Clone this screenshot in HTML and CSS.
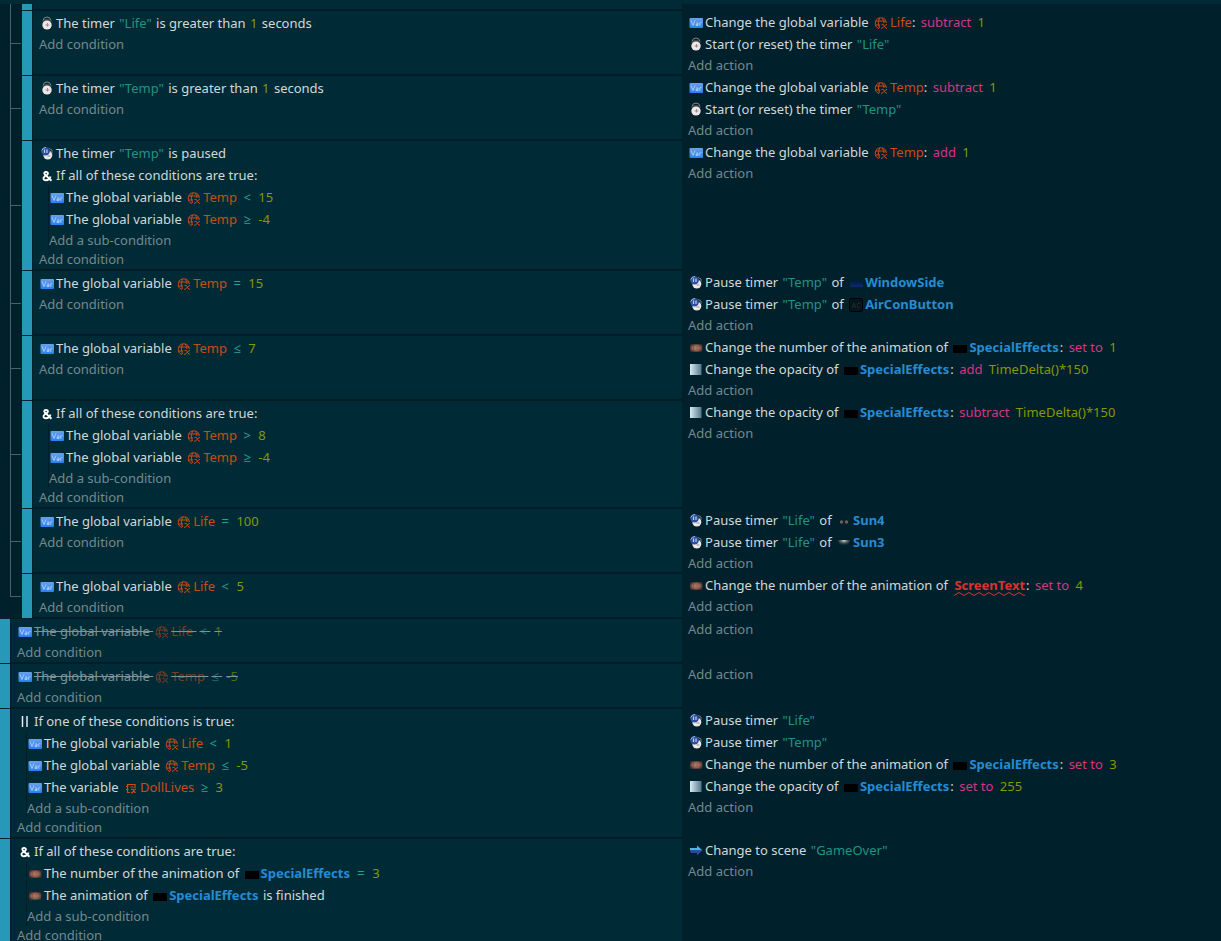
FILE: index.html
```html
<!DOCTYPE html>
<html lang="en">
<head>
<meta charset="utf-8">
<title>Events sheet</title>
<link rel="stylesheet" href="styles.css">
</head>
<body>
<svg class="defs" aria-hidden="true">
  <defs>
    <linearGradient id="g-var" x1="0" y1="0" x2="0" y2="1"><stop offset="0" stop-color="#6aa0e8"/><stop offset="1" stop-color="#2482f4"/></linearGradient>
    <linearGradient id="g-op" x1="0" y1="0" x2="1" y2="0"><stop offset="0" stop-color="#d8ebf2"/><stop offset="1" stop-color="#54788c"/></linearGradient>
    <linearGradient id="g-win" x1="0" y1="0" x2="0" y2="1"><stop offset="0" stop-color="#02184a"/><stop offset="1" stop-color="#0c2c6e"/></linearGradient>
    <radialGradient id="g-film"><stop offset="0" stop-color="#b98370"/><stop offset="0.7" stop-color="#8a5c4c"/><stop offset="1" stop-color="#49332f"/></radialGradient>
    <radialGradient id="g-sun" cx="0.5" cy="0.1" r="0.7"><stop offset="0" stop-color="#d8d2c8"/><stop offset="1" stop-color="#33403f" stop-opacity="0"/></radialGradient>
  </defs>
  <symbol id="var" viewBox="0 0 14 14">
    <rect x="0.5" y="3" width="13.5" height="10" rx="1" fill="url(#g-var)"/>
    <path d="M2 5.500 4 10.500 6 5.500M7.200 8h1.800v2.500H7V9.300h2M10.800 10.800V7.800q.6-.6 1.600-.2" fill="none" stroke="#a9caf6" stroke-width="1"/>
  </symbol>
  <symbol id="clock" viewBox="0 0 14 14">
    <path d="M3 4.500Q3.600 1 7 1t4 3.500" fill="none" stroke="#7d888b" stroke-width="1"/>
    <path d="M2.200 5 5 3h4l2.800 2-1 1.500H3.200z" fill="#40464b"/>
    <ellipse cx="7" cy="9" rx="4.700" ry="4.600" fill="#ece8e6"/>
    <path d="M7.500 7v3.500M5.500 9h4" stroke="#a08c8e" stroke-width="1"/>
  </symbol>
  <symbol id="pause" viewBox="0 0 14 14">
    <ellipse cx="7.800" cy="9" rx="4.500" ry="4.600" fill="#ebe8e8"/>
    <path d="M9 2.500l3 1.500v3" fill="none" stroke="#777d82"/>
    <path d="M7.500 10h3" stroke="#a08c8c"/>
    <circle cx="5.500" cy="5.300" r="4.300" fill="#2b4f9f"/>
    <path d="M1.800 4.500Q3 1.500 6 1.500" fill="none" stroke="#a3b6dc"/>
    <path d="M4.500 3.500v3.500M7 3.500v3.500" stroke="#c2d0ee" stroke-width="1.200"/>
  </symbol>
  <symbol id="and" viewBox="0 0 14 14">
    <path d="M11.500 12.700 5 6.700C3.500 5 4.500 3.900 6.200 3.900S8.600 5.500 7.200 6.700L4.600 8.400C2.500 10 3.500 12.300 5.800 12.300 8.500 12.300 10 10.500 10.500 8.600" fill="none" stroke="#fff" stroke-width="1.900"/>
  </symbol>
  <symbol id="or" viewBox="0 0 14 14"><path d="M4.500 2v11M9 2v11" stroke="#e8ecec" stroke-width="1.500"/></symbol>
  <symbol id="film" viewBox="0 0 14 14">
    <rect x="1" y="4" width="12.500" height="8" rx="2" fill="url(#g-film)"/>
    <path d="M4.500 6v4M8 6v4M11 6v4" stroke="#7c564a" stroke-width="0.600"/>
  </symbol>
  <symbol id="opacity" viewBox="0 0 14 14"><rect x="1" y="2" width="11.500" height="11" fill="url(#g-op)"/></symbol>
  <symbol id="scene" viewBox="0 0 14 14">
    <path d="M1 5h7V2.500L13.500 7.500H1z" fill="#4db4ea"/><path d="M1 7.500h12.500L8 12.500V10H2z" fill="#3344a4"/>
  </symbol>
  <symbol id="globe" viewBox="0 0 14 14">
    <g fill="none" stroke="#cb4b16" stroke-width="1">
      <path d="M12.300 7A5.500 5.500 0 1 0 5 12.500M5.500 12Q3 7 5.500 2M8 2q2 2 2 5M2 5h10M1.500 9H6"/>
      <path d="M7.500 8.500q2-1 2.500 1t3 3M7 12.500q2-.3 3-2t3-2"/>
    </g>
  </symbol>
  <symbol id="scenevar" viewBox="0 0 14 14">
    <g fill="none" stroke="#cb4b16" stroke-width="1.200">
      <path d="M11 7.500V3.500H3.500v8H6M2 5.500h2.500M2 8.500h2.500M6.500 6h3"/>
      <path d="M7 8.500q2-1 2.500 1t2.500 2M7 12q2-.3 2.500-2t2.500-1.500"/>
    </g>
  </symbol>
  <symbol id="black" viewBox="0 0 14 14"><rect y="4" width="14" height="8" fill="#000"/></symbol>
  <symbol id="window" viewBox="0 0 14 14"><rect x="1" y="5" width="13" height="6" fill="url(#g-win)"/></symbol>
  <symbol id="aircon" viewBox="0 0 14 14">
    <rect x="0.500" y="0.500" width="13" height="13" rx="2" fill="#02161c" stroke="#000"/>
    <path d="M3 10 5 5l1.500 5M3.500 8h3M11 5.500q-3-1-3 2t3 2" fill="none" stroke="#22282a"/>
  </symbol>
  <symbol id="dots" viewBox="0 0 14 14"><g fill="#765e58"><circle cx="4.500" cy="8" r="1.700"/><circle cx="9.500" cy="8" r="1.700"/></g></symbol>
  <symbol id="sun" viewBox="0 0 14 14"><path d="M1 4h12q-1 7-6 7T1 4" fill="url(#g-sun)"/></symbol>
</svg>

<main class="sheet">
  <div class="edge"></div>
  <section class="sub-events">
    <div class="event partial"><div class="branch"></div><div class="handle"></div><div class="conditions"></div><div class="actions"></div></div>

    <article class="event">
      <div class="branch"></div><div class="handle"></div>
      <div class="conditions">
        <div class="item"><svg><use href="#clock"/></svg><p>The timer <i class="str">"Life"</i> is greater than <i class="num">1</i> seconds</p></div>
        <button class="add">Add condition</button>
      </div>
      <div class="actions">
        <div class="item"><svg><use href="#var"/></svg><p>Change the global variable <i class="var"><svg><use href="#globe"/></svg>Life</i>: <i class="mod">subtract</i> <i class="num">1</i></p></div>
        <div class="item"><svg><use href="#clock"/></svg><p>Start (or reset) the timer <i class="str">"Life"</i></p></div>
        <button class="add">Add action</button>
      </div>
    </article>

    <article class="event">
      <div class="branch"></div><div class="handle"></div>
      <div class="conditions">
        <div class="item"><svg><use href="#clock"/></svg><p>The timer <i class="str">"Temp"</i> is greater than <i class="num">1</i> seconds</p></div>
        <button class="add">Add condition</button>
      </div>
      <div class="actions">
        <div class="item"><svg><use href="#var"/></svg><p>Change the global variable <i class="var"><svg><use href="#globe"/></svg>Temp</i>: <i class="mod">subtract</i> <i class="num">1</i></p></div>
        <div class="item"><svg><use href="#clock"/></svg><p>Start (or reset) the timer <i class="str">"Temp"</i></p></div>
        <button class="add">Add action</button>
      </div>
    </article>

    <article class="event">
      <div class="branch"></div><div class="handle"></div>
      <div class="conditions">
        <div class="item"><svg><use href="#pause"/></svg><p>The timer <i class="str">"Temp"</i> is paused</p></div>
        <div class="item"><svg><use href="#and"/></svg><p>If all of these conditions are true:</p></div>
        <div class="nested">
          <div class="item"><svg><use href="#var"/></svg><p>The global variable <i class="var"><svg><use href="#globe"/></svg>Temp</i> <i class="rel">&lt;</i> <i class="num">15</i></p></div>
          <div class="item"><svg><use href="#var"/></svg><p>The global variable <i class="var"><svg><use href="#globe"/></svg>Temp</i> <i class="rel">≥</i> <i class="num">-4</i></p></div>
          <button class="add">Add a sub-condition</button>
        </div>
        <button class="add">Add condition</button>
      </div>
      <div class="actions">
        <div class="item"><svg><use href="#var"/></svg><p>Change the global variable <i class="var"><svg><use href="#globe"/></svg>Temp</i>: <i class="mod">add</i> <i class="num">1</i></p></div>
        <button class="add">Add action</button>
      </div>
    </article>

    <article class="event">
      <div class="branch"></div><div class="handle"></div>
      <div class="conditions">
        <div class="item"><svg><use href="#var"/></svg><p>The global variable <i class="var"><svg><use href="#globe"/></svg>Temp</i> <i class="rel">=</i> <i class="num">15</i></p></div>
        <button class="add">Add condition</button>
      </div>
      <div class="actions">
        <div class="item"><svg><use href="#pause"/></svg><p>Pause timer <i class="str">"Temp"</i> of <b class="obj"><svg><use href="#window"/></svg>WindowSide</b></p></div>
        <div class="item"><svg><use href="#pause"/></svg><p>Pause timer <i class="str">"Temp"</i> of <b class="obj"><svg><use href="#aircon"/></svg>AirConButton</b></p></div>
        <button class="add">Add action</button>
      </div>
    </article>

    <article class="event">
      <div class="branch"></div><div class="handle"></div>
      <div class="conditions">
        <div class="item"><svg><use href="#var"/></svg><p>The global variable <i class="var"><svg><use href="#globe"/></svg>Temp</i> <i class="rel">≤</i> <i class="num">7</i></p></div>
        <button class="add">Add condition</button>
      </div>
      <div class="actions">
        <div class="item"><svg><use href="#film"/></svg><p>Change the number of the animation of <b class="obj"><svg><use href="#black"/></svg>SpecialEffects</b>: <i class="mod">set to</i> <i class="num">1</i></p></div>
        <div class="item"><svg><use href="#opacity"/></svg><p>Change the opacity of <b class="obj"><svg><use href="#black"/></svg>SpecialEffects</b>: <i class="mod">add</i> <i class="num">TimeDelta()*150</i></p></div>
        <button class="add">Add action</button>
      </div>
    </article>

    <article class="event">
      <div class="branch"></div><div class="handle"></div>
      <div class="conditions">
        <div class="item"><svg><use href="#and"/></svg><p>If all of these conditions are true:</p></div>
        <div class="nested">
          <div class="item"><svg><use href="#var"/></svg><p>The global variable <i class="var"><svg><use href="#globe"/></svg>Temp</i> <i class="rel">&gt;</i> <i class="num">8</i></p></div>
          <div class="item"><svg><use href="#var"/></svg><p>The global variable <i class="var"><svg><use href="#globe"/></svg>Temp</i> <i class="rel">≥</i> <i class="num">-4</i></p></div>
          <button class="add">Add a sub-condition</button>
        </div>
        <button class="add">Add condition</button>
      </div>
      <div class="actions">
        <div class="item"><svg><use href="#opacity"/></svg><p>Change the opacity of <b class="obj"><svg><use href="#black"/></svg>SpecialEffects</b>: <i class="mod">subtract</i> <i class="num">TimeDelta()*150</i></p></div>
        <button class="add">Add action</button>
      </div>
    </article>

    <article class="event">
      <div class="branch"></div><div class="handle"></div>
      <div class="conditions">
        <div class="item"><svg><use href="#var"/></svg><p>The global variable <i class="var"><svg><use href="#globe"/></svg>Life</i> <i class="rel">=</i> <i class="num">100</i></p></div>
        <button class="add">Add condition</button>
      </div>
      <div class="actions">
        <div class="item"><svg><use href="#pause"/></svg><p>Pause timer <i class="str">"Life"</i> of <b class="obj"><svg><use href="#dots"/></svg>Sun4</b></p></div>
        <div class="item"><svg><use href="#pause"/></svg><p>Pause timer <i class="str">"Life"</i> of <b class="obj"><svg><use href="#sun"/></svg>Sun3</b></p></div>
        <button class="add">Add action</button>
      </div>
    </article>

    <article class="event">
      <div class="branch"></div><div class="handle"></div>
      <div class="conditions">
        <div class="item"><svg><use href="#var"/></svg><p>The global variable <i class="var"><svg><use href="#globe"/></svg>Life</i> <i class="rel">&lt;</i> <i class="num">5</i></p></div>
        <button class="add">Add condition</button>
      </div>
      <div class="actions">
        <div class="item"><svg><use href="#film"/></svg><p>Change the number of the animation of <b class="missing">ScreenText</b>: <i class="mod">set to</i> <i class="num">4</i></p></div>
        <button class="add">Add action</button>
      </div>
    </article>
  </section>

  <article class="event">
    <div class="handle"></div>
    <div class="conditions">
      <div class="item disabled"><svg><use href="#var"/></svg><p>The global variable <i class="var"><svg><use href="#globe"/></svg>Life</i> <i class="rel">&lt;</i> <i class="num">1</i></p></div>
      <button class="add">Add condition</button>
    </div>
    <div class="actions"><button class="add">Add action</button></div>
  </article>

  <article class="event">
    <div class="handle"></div>
    <div class="conditions">
      <div class="item disabled"><svg><use href="#var"/></svg><p>The global variable <i class="var"><svg><use href="#globe"/></svg>Temp</i> <i class="rel">≤</i> <i class="num">-5</i></p></div>
      <button class="add">Add condition</button>
    </div>
    <div class="actions"><button class="add">Add action</button></div>
  </article>

  <article class="event">
    <div class="handle"></div>
    <div class="conditions">
      <div class="item"><svg><use href="#or"/></svg><p>If one of these conditions is true:</p></div>
      <div class="nested">
        <div class="item"><svg><use href="#var"/></svg><p>The global variable <i class="var"><svg><use href="#globe"/></svg>Life</i> <i class="rel">&lt;</i> <i class="num">1</i></p></div>
        <div class="item"><svg><use href="#var"/></svg><p>The global variable <i class="var"><svg><use href="#globe"/></svg>Temp</i> <i class="rel">≤</i> <i class="num">-5</i></p></div>
        <div class="item"><svg><use href="#var"/></svg><p>The variable <i class="var"><svg><use href="#scenevar"/></svg>DollLives</i> <i class="rel">≥</i> <i class="num">3</i></p></div>
        <button class="add">Add a sub-condition</button>
      </div>
      <button class="add">Add condition</button>
    </div>
    <div class="actions">
      <div class="item"><svg><use href="#pause"/></svg><p>Pause timer <i class="str">"Life"</i></p></div>
      <div class="item"><svg><use href="#pause"/></svg><p>Pause timer <i class="str">"Temp"</i></p></div>
      <div class="item"><svg><use href="#film"/></svg><p>Change the number of the animation of <b class="obj"><svg><use href="#black"/></svg>SpecialEffects</b>: <i class="mod">set to</i> <i class="num">3</i></p></div>
      <div class="item"><svg><use href="#opacity"/></svg><p>Change the opacity of <b class="obj"><svg><use href="#black"/></svg>SpecialEffects</b>: <i class="mod">set to</i> <i class="num">255</i></p></div>
      <button class="add">Add action</button>
    </div>
  </article>

  <article class="event">
    <div class="handle"></div>
    <div class="conditions">
      <div class="item"><svg><use href="#and"/></svg><p>If all of these conditions are true:</p></div>
      <div class="nested">
        <div class="item"><svg><use href="#film"/></svg><p>The number of the animation of <b class="obj"><svg><use href="#black"/></svg>SpecialEffects</b> <i class="rel">=</i> <i class="num">3</i></p></div>
        <div class="item"><svg><use href="#film"/></svg><p>The animation of <b class="obj"><svg><use href="#black"/></svg>SpecialEffects</b> is finished</p></div>
        <button class="add">Add a sub-condition</button>
      </div>
      <button class="add">Add condition</button>
    </div>
    <div class="actions">
      <div class="item"><svg><use href="#scene"/></svg><p>Change to scene <i class="str">"GameOver"</i></p></div>
      <button class="add">Add action</button>
    </div>
  </article>
</main>
</body>
</html>
```

FILE: styles.css
```css
* { box-sizing: border-box; }

body {
  margin: 0;
  background: #00212b;
  color: #d2d8d8;
  font-family: "Noto Sans", "Open Sans", sans-serif;
  font-size: 13px;
}

.defs { position: absolute; width: 0; height: 0; }

.sheet {
  --split: 55.86vw;
  --gutter: 0px;
  height: 100vh;
  overflow: hidden;
}

.edge { height: 4px; background: #002b36; }

.sub-events { --gutter: 22px; }

.event { display: flex; }

/* Tree lines that join the sub-events to their parent */
.branch {
  flex: none;
  display: grid;
  grid-template-rows: calc(50% + 1px) 1fr;
  width: 12px;
  margin-left: 10px;
}
.branch::before,
.branch::after {
  content: "";
  border-left: 1px solid #4b6068;
}
.branch::before { border-bottom: 1px solid #4b6068; margin-right: 1px; }
.event:last-child .branch::after { border-color: transparent; }
.partial .branch::before { border-bottom: 0; }

.handle { flex: none; width: 10px; margin-top: 1px; background: #2699b9; }

.conditions {
  flex: none;
  width: calc(var(--split) - var(--gutter) - 10px);
  padding: 1px 0 1px 6px;
  background: #002b36;
  border: 1px solid #001e27;
  border-right: 0;
}

.actions { flex: 1; min-width: 0; padding: 1px 0 1px 6px; }

.partial .handle { margin-top: 0; }
.partial .conditions { height: 6px; border-top: 0; padding: 0; }
.partial .actions { padding: 0; }

.nested { margin-left: 9px; border-left: 1px solid #001e27; }

.item { display: flex; align-items: center; height: 22px; }
.item p { margin: 0; line-height: 22px; white-space: nowrap; }
.item i { font-style: normal; }
.item svg { flex: none; width: 14px; height: 14px; margin: 0 2px 0 1px; }
.item p svg { margin-left: 2px; vertical-align: -3px; }

.add {
  display: block;
  height: 19px;
  padding: 0;
  border: 0;
  background: none;
  color: #75888c;
  font: inherit;
  line-height: 20px;
}

.str { margin: 0 1px; color: #219384; }
.num { margin: 0 1px; color: #859900; }
.var { color: #cb4b16; }
.mod { margin-left: 2px; color: #d33682; }
.rel { margin-left: 3px; color: #2aa198; }
.rel + .num { margin-left: 4px; }
.mod + .num { margin-left: 3px; }
.obj { margin-right: 1px; color: #268bd2; }
.missing {
  margin: 0 1px 0 3px;
  padding-bottom: 2px;
  color: #dc322f;
  background: url("data:image/svg+xml,%3Csvg xmlns='http://www.w3.org/2000/svg' width='10' height='4'%3E%3Cpath d='M0 3.500 5 .5l5 3' fill='none' stroke='%23dc322f'/%3E%3C/svg%3E") repeat-x left bottom;
}

.disabled p { opacity: 0.6; text-decoration: line-through; }
```
